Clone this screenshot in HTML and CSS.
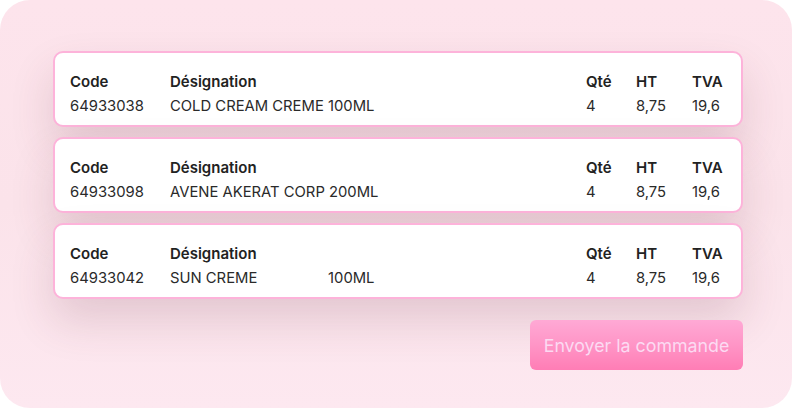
FILE: index.html
```html
<!DOCTYPE html>
<html lang="fr">
<head>
<meta charset="utf-8">
<link rel="stylesheet" href="styles.css">
</head>
<body>
<div class="panel">
  <div class="list">
    <div class="card">
      <span class="h">Code</span><span class="h">Désignation</span><span class="h">Qté</span><span class="h">HT</span><span class="h">TVA</span>
      <span>64933038</span><span>COLD CREAM CREME 100ML</span><span>4</span><span>8,75</span><span>19,6</span>
    </div>
    <div class="card">
      <span class="h">Code</span><span class="h">Désignation</span><span class="h">Qté</span><span class="h">HT</span><span class="h">TVA</span>
      <span>64933098</span><span>AVENE AKERAT CORP 200ML</span><span>4</span><span>8,75</span><span>19,6</span>
    </div>
    <div class="card">
      <span class="h">Code</span><span class="h">Désignation</span><span class="h">Qté</span><span class="h">HT</span><span class="h">TVA</span>
      <span>64933042</span><span class="pre">SUN CREME                 100ML</span><span>4</span><span>8,75</span><span>19,6</span>
    </div>
  </div>
  <div class="actions">
    <button class="send">Envoyer la commande</button>
  </div>
</div>
</body>
</html>
```
FILE: styles.css
```css
html, body { margin: 0; padding: 0; background: #ffffff; }
body { font-family: Inter, "Noto Sans", sans-serif; }
.panel {
  width: 792px;
  height: 408px;
  box-sizing: border-box;
  border-radius: 30px;
  background: linear-gradient(180deg, #fde4ec 0%, #fbe3ea 50%, #fde8f0 100%);
  padding: 51px 49px 0 53px;
  overflow: hidden;
}
.list { display: flex; flex-direction: column; gap: 10px; }
.card {
  display: grid;
  grid-template-columns: 100px 1fr 50px 56px 34px;
  row-gap: 2px;
  padding: 18px 15px 8px 15px;
  height: 76px;
  box-sizing: border-box;
  background: #ffffff;
  border: 2px solid #fdb3da;
  border-radius: 10px;
  box-shadow: 0 22px 44px rgba(100, 45, 65, 0.16);
  font-size: 14.8px;
  line-height: 22px;
  color: #2a2a2a;
}
.card .h { font-weight: 600; color: #222222; font-size: 15px; }
.card .pre { white-space: pre; }
.actions { display: flex; justify-content: flex-end; margin-top: 21px; }
.send {
  width: 213px;
  height: 50px;
  border: none;
  border-radius: 6px;
  background: linear-gradient(180deg, #ffa9d5 0%, #ff95c6 50%, #ff7db5 100%);
  color: #fcdaf2;
  font-family: Inter, "Noto Sans", sans-serif;
  font-size: 17.8px;
  padding: 0;
}
```
